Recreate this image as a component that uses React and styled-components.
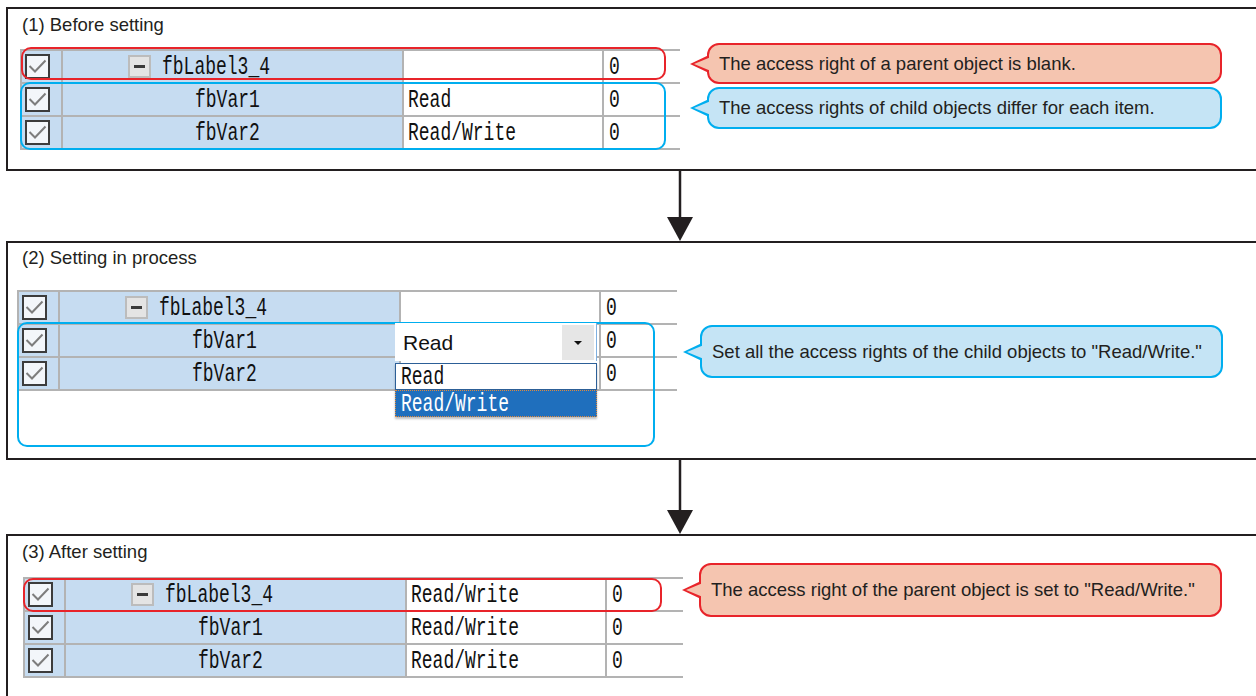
import React from "react";
import styled, { createGlobalStyle } from "styled-components";

const GlobalStyle = createGlobalStyle`
  html, body {
    margin: 0;
    padding: 0;
    background: #fff;
    overflow: hidden;
  }
  body {
    font-family: "Liberation Sans", Arial, sans-serif;
    color: #231f20;
  }
`;

const INK = "#231f20";
const GRID = "#b3b3b3";
const CELL_BLUE = "#c6dcf1";
const RED = "#e8242a";
const BLUE = "#00aeef";

const tones = {
    red: { line: RED, fill: "#f5c5b0" },
    blue: { line: BLUE, fill: "#c5e4f5" },
};

const Page = styled.div`
    width: 1256px;
    height: 696px;
    overflow: hidden;
    box-sizing: border-box;
    padding: 7px 0 0 6px;
    display: flex;
    flex-direction: column;
`;

const Panel = styled.section`
    flex-shrink: 0;
    width: 1250px;
    height: ${p => p.$h}px;
    box-sizing: border-box;
    border: 2px solid ${INK};
    border-right: none;
    background: #fff;
`;

const Title = styled.div`
    height: ${p => p.$h}px;
    box-sizing: border-box;
    padding: ${p => p.$top}px 0 0 14px;
    font-size: 18.5px;
    line-height: 20px;
    color: ${INK};
`;

const Body = styled.div`
    display: flex;
    align-items: flex-start;
`;

const TableWrap = styled.div`
    position: relative;
    margin-left: ${p => p.$left}px;
    width: 660px;
    flex-shrink: 0;
`;

const Table = styled.div`
    border-top: 2px solid ${GRID};
    border-left: 2px solid ${GRID};
`;

const Row = styled.div`
    display: grid;
    grid-template-columns: 41px 341px 200px 1fr;
    height: 33px;
`;

const Cell = styled.div`
    box-sizing: border-box;
    border-bottom: 2px solid ${GRID};
    border-right: ${p => (p.$last ? "none" : `2px solid ${GRID}`)};
    background: ${p => (p.$tint ? CELL_BLUE : "#fff")};
    display: flex;
    align-items: center;
    padding-left: ${p => p.$pad || 0}px;
    overflow: hidden;
`;

const Tall = styled.span`
    display: inline-block;
    font-family: "Liberation Mono", "DejaVu Sans Mono", monospace;
    font-size: 18px;
    line-height: 1;
    color: #111;
    transform: scaleY(1.4);
    white-space: pre;
`;

const CheckBox = styled.span`
    width: 25px;
    height: 25px;
    box-sizing: border-box;
    border: 2px solid #3c3c3c;
    background: #f3f6fa;
    display: flex;
    align-items: center;
    justify-content: center;
`;

const Expander = styled.span`
    width: 23px;
    height: 23px;
    box-sizing: border-box;
    border: 2px solid #bcbcbc;
    background: #e4e4e4;
    display: flex;
    align-items: center;
    justify-content: center;
    margin-right: 11px;

    &::after {
        content: "";
        width: 11px;
        height: 3px;
        background: #3a3a3a;
    }
`;

const Outline = styled.div`
    position: absolute;
    left: ${p => p.$x}px;
    top: ${p => p.$y}px;
    width: ${p => p.$w}px;
    height: ${p => p.$h}px;
    box-sizing: border-box;
    border: 2px solid ${p => tones[p.$tone].line};
    border-radius: 10px;
    pointer-events: none;
`;

const Combo = styled.div`
    position: absolute;
    left: 378px;
    top: 33px;
    width: 202px;
    height: 38px;
    box-sizing: border-box;
    background: #fff;
    border-right: 1px solid #7fb0e0;
    display: flex;
    align-items: center;
    justify-content: space-between;
    padding: 2px 2px 1px 8px;
    font-family: "Liberation Sans", Arial, sans-serif;
    font-size: 21px;
    color: #111;
`;

const ComboButton = styled.span`
    width: 32px;
    height: 100%;
    background: #e6e6e6;
    display: flex;
    align-items: center;
    justify-content: center;

    &::after {
        content: "";
        border-style: solid;
        border-width: 4px 4px 0 4px;
        border-color: #111 transparent transparent transparent;
    }
`;

const ListBox = styled.div`
    position: absolute;
    left: 378px;
    top: 73px;
    width: 202px;
    background: #fff;
    box-shadow: 0 2px 2px rgba(0, 0, 0, 0.25);
`;

const ListItem = styled.div`
    height: 27px;
    box-sizing: border-box;
    display: flex;
    align-items: center;
    padding-left: 5px;
    border: ${p => (p.$selected ? "1px dotted #e08a3c" : "1px solid #2c5f97")};
    background: ${p => (p.$selected ? "#1f6fbd" : "#fff")};

    ${Tall} {
        color: ${p => (p.$selected ? "#fff" : "#111")};
    }
`;

const Callouts = styled.div`
    display: flex;
    flex-direction: column;
    gap: 3px;
    margin-left: ${p => p.$left}px;
    margin-top: ${p => p.$top}px;
`;

const Callout = styled.div`
    position: relative;
    width: ${p => p.$w}px;
    height: ${p => p.$h}px;
    box-sizing: border-box;
    border: 2px solid ${p => tones[p.$tone].line};
    background: ${p => tones[p.$tone].fill};
    border-radius: 12px;
    display: flex;
    align-items: center;
    padding: 0 10px;
    font-size: 18.5px;
    color: ${INK};
    white-space: nowrap;

    &::before,
    &::after {
        content: "";
        position: absolute;
        top: 50%;
        border-style: solid;
    }
    &::before {
        left: -19px;
        margin-top: -9px;
        border-width: 9px 19px 9px 0;
        border-color: transparent ${p => tones[p.$tone].line} transparent transparent;
    }
    &::after {
        left: -15px;
        margin-top: -7px;
        border-width: 7px 17px 7px 0;
        border-color: transparent ${p => tones[p.$tone].fill} transparent transparent;
    }
`;

const Connector = styled.div`
    flex-shrink: 0;
    height: ${p => p.$h}px;
    padding-left: 659px;
`;

const Arrow = ({ h }) => (
    <svg width="30" height={h} viewBox={`0 0 30 ${h}`}>
        <line x1="15" y1="0" x2="15" y2={h - 20} stroke={INK} strokeWidth="2.5" />
        <polygon points={`2,${h - 24} 28,${h - 24} 15,${h}`} fill={INK} />
    </svg>
);

const CheckMark = () => (
    <svg width="21" height="21" viewBox="0 0 21 21">
        <polyline points="2.5,10 8,15.5 18.5,4.5" fill="none" stroke="#7d7d7d" strokeWidth="2" />
    </svg>
);

const TreeRow = ({ row }) => (
    <Row>
        <Cell $tint $pad={3}>
            <CheckBox>
                <CheckMark />
            </CheckBox>
        </Cell>
        <Cell $tint $pad={row.parent ? 65 : 132}>
            {row.parent && <Expander />}
            <Tall>{row.label}</Tall>
        </Cell>
        <Cell $pad={4}>
            <Tall>{row.access}</Tall>
        </Cell>
        <Cell $last $pad={5}>
            <Tall>0</Tall>
        </Cell>
    </Row>
);

const makeRows = (a, b, c) => [
    { parent: true, label: "fbLabel3_4", access: a },
    { label: "fbVar1", access: b },
    { label: "fbVar2", access: c },
];

const App = () => {
    return (
        <>
            <GlobalStyle />
            <Page>
                <Panel $h={164}>
                    <Title $h={40} $top={6}>(1) Before setting</Title>
                    <Body>
                        <TableWrap $left={12}>
                            <Table>
                                {makeRows("", "Read", "Read/Write").map(r => (
                                    <TreeRow key={r.label} row={r} />
                                ))}
                            </Table>
                            <Outline $tone="red" $x={1} $y={-2} $w={645} $h={33} />
                            <Outline $tone="blue" $x={0} $y={33} $w={646} $h={68} />
                        </TableWrap>
                        <Callouts $left={27} $top={-6}>
                            <Callout $tone="red" $w={515} $h={41}>
                                The access right of a parent object is blank.
                            </Callout>
                            <Callout $tone="blue" $w={515} $h={42}>
                                The access rights of child objects differ for each item.
                            </Callout>
                        </Callouts>
                    </Body>
                </Panel>

                <Connector $h={70}>
                    <Arrow h={70} />
                </Connector>

                <Panel $h={219}>
                    <Title $h={47} $top={5}>(2) Setting in process</Title>
                    <Body>
                        <TableWrap $left={9}>
                            <Table>
                                {makeRows("", "", "").map(r => (
                                    <TreeRow key={r.label} row={r} />
                                ))}
                            </Table>
                            <Outline $tone="blue" $x={0} $y={32} $w={638} $h={125} />
                            <Combo>
                                Read
                                <ComboButton />
                            </Combo>
                            <ListBox>
                                <ListItem>
                                    <Tall>Read</Tall>
                                </ListItem>
                                <ListItem $selected>
                                    <Tall>Read/Write</Tall>
                                </ListItem>
                            </ListBox>
                        </TableWrap>
                        <Callouts $left={23} $top={35}>
                            <Callout $tone="blue" $w={523} $h={53}>
                                Set all the access rights of the child objects to "Read/Write."
                            </Callout>
                        </Callouts>
                    </Body>
                </Panel>

                <Connector $h={74}>
                    <Arrow h={74} />
                </Connector>

                <Panel $h={220}>
                    <Title $h={41} $top={6}>(3) After setting</Title>
                    <Body>
                        <TableWrap $left={15}>
                            <Table>
                                {makeRows("Read/Write", "Read/Write", "Read/Write").map(r => (
                                    <TreeRow key={r.label} row={r} />
                                ))}
                            </Table>
                            <Outline $tone="red" $x={0} $y={1} $w={639} $h={34} />
                        </TableWrap>
                        <Callouts $left={16} $top={-14}>
                            <Callout $tone="red" $w={523} $h={54}>
                                The access right of the parent object is set to "Read/Write."
                            </Callout>
                        </Callouts>
                    </Body>
                </Panel>
            </Page>
        </>
    );
};

export default App;
